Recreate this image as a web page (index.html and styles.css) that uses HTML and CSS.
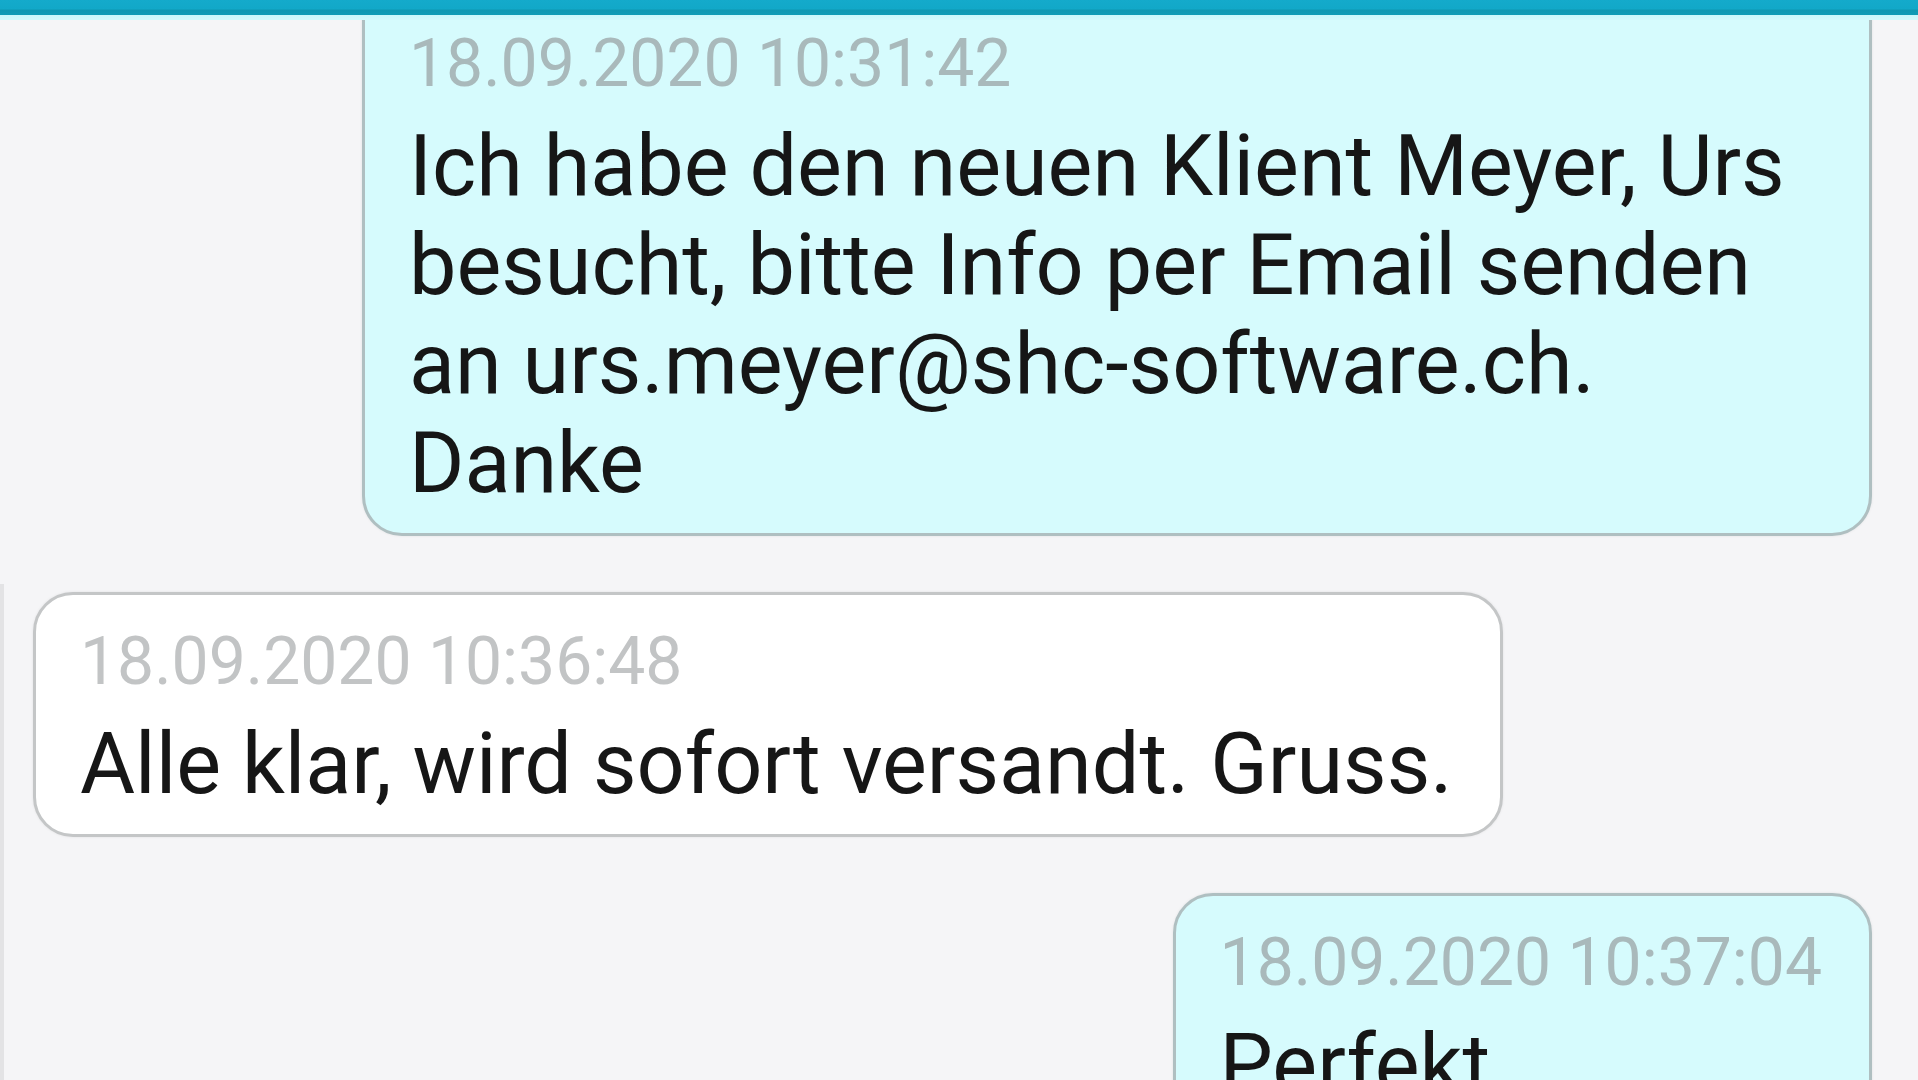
FILE: index.html
```html
<!DOCTYPE html>
<html lang="de">
<head>
<meta charset="utf-8">
<title>Chat</title>
<link rel="stylesheet" href="styles.css">
</head>
<body>
<header class="appbar"></header>
<main class="chat">
  <div class="msg msg-sent msg-first">
    <div class="stamp">18.09.2020 10:31:42</div>
    <div class="text">Ich habe den neuen Klient Meyer, Urs besucht, bitte Info per Email senden an urs.meyer@shc-software.ch. Danke</div>
  </div>
  <div class="msg msg-recv">
    <div class="stamp">18.09.2020 10:36:48</div>
    <div class="text">Alle klar, wird sofort versandt. Gruss.</div>
  </div>
  <div class="msg msg-sent">
    <div class="stamp">18.09.2020 10:37:04</div>
    <div class="text">Perfekt</div>
  </div>
</main>
</body>
</html>
```
FILE: styles.css
```css
* { box-sizing: border-box; }
html, body {
  margin: 0;
  padding: 0;
  height: 100%;
  overflow: hidden;
}
body {
  background: #f5f5f7;
  font-family: Roboto, "Liberation Sans", Arial, sans-serif;
  color: #161616;
}
.appbar {
  position: relative;
  z-index: 2;
  height: 20px;
  background: linear-gradient(#14aacb 0, #12a8c8 9px, #0e97b2 10px, #0f9bb6 15px, #c8f7fb 15px, #d2f9fc 20px);
}
.chat {
  position: relative;
  display: flex;
  flex-direction: column;
  gap: 56px;
  margin-top: -26px;
  padding: 0 46px 0 33px;
  min-height: 1200px;
}
.chat::before {
  content: "";
  position: absolute;
  left: 0;
  top: 590px;
  bottom: 0;
  width: 4px;
  background: #e3e3e5;
}
.msg {
  border: 3px solid #bfc6c7;
  border-radius: 40px;
  padding: 27px 47px 20px 44px;
  box-shadow: 0 0 3px rgba(0, 0, 0, 0.08);
}
.msg-sent {
  align-self: flex-end;
  background: #d6fbfd;
  border-color: #afbfc1;
}
.msg-recv {
  align-self: flex-start;
  background: #ffffff;
  border-color: #c4c6c7;
}
.msg-first {
  width: 1510px;
  border-top-left-radius: 0;
  border-top-right-radius: 0;
}
.msg-first .text {
  max-width: 1400px;
}
.stamp {
  font-size: 66px;
  line-height: 80px;
  color: #c2c4c5;
}
.msg-sent .stamp { color: #a9b9bb; }
.text {
  font-size: 84.5px;
  line-height: 99px;
  margin-top: 13px;
}
```
